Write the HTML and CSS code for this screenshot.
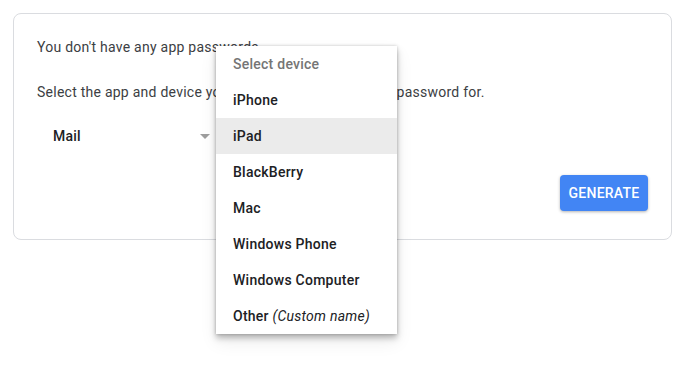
FILE: index.html
```html
<!DOCTYPE html>
<html>
<head>
<meta charset="utf-8">
<link rel="stylesheet" href="styles.css">
</head>
<body>
<div class="card">
  <p class="line first">You don't have any app passwords.</p>
  <p class="line second">Select the app and device you want to generate the app password for.</p>
  <div class="row">
    <div class="select">
      <span class="value">Mail</span>
      <span class="arrow"></span>
    </div>
    <div class="select device">
      <span class="value">Select device</span>
      <span class="arrow"></span>
      <ul class="menu">
        <li class="item header">Select device</li>
        <li class="item">iPhone</li>
        <li class="item active">iPad</li>
        <li class="item">BlackBerry</li>
        <li class="item">Mac</li>
        <li class="item">Windows Phone</li>
        <li class="item">Windows Computer</li>
        <li class="item">Other <em>(Custom name)</em></li>
      </ul>
    </div>
  </div>
  <div class="actions">
    <button class="btn">GENERATE</button>
  </div>
</div>
</body>
</html>
```
FILE: styles.css
```css
* { box-sizing: border-box; }
html, body { margin: 0; padding: 0; background: #fff; }
html { height: 100%; }
body {
  min-height: 100%;
  padding: 13px;
  font-family: Roboto, "Liberation Sans", Arial, sans-serif;
  font-size: 14px;
  letter-spacing: 0.25px;
  color: #3c4043;
}
.card {
  border: 1px solid #dadce0;
  border-radius: 8px;
  padding: 23px 23px 28px 23px;
  height: 227px;
}
.line { margin: 0; line-height: 20px; }
.second { margin-top: 25px; }
.row {
  display: flex;
  margin-top: 16px;
  height: 36px;
}
.select {
  position: relative;
  width: 179px;
  height: 36px;
  display: flex;
  align-items: center;
  padding-left: 16px;
  font-weight: 500;
  color: #202124;
}
.select.device { width: 181px; }
.arrow {
  position: absolute;
  right: 6px;
  top: 16px;
  width: 0; height: 0;
  border-left: 5px solid transparent;
  border-right: 5px solid transparent;
  border-top: 5px solid #9e9e9e;
}
.menu {
  position: absolute;
  left: 0;
  top: -72px;
  width: 181px;
  margin: 0;
  padding: 0;
  list-style: none;
  background: #fff;
  box-shadow: 0 4px 6px rgba(0,0,0,0.25), 0 0 3px rgba(0,0,0,0.2), 0 8px 16px rgba(0,0,0,0.08);
  z-index: 2;
}
.item {
  height: 36px;
  line-height: 36px;
  padding-left: 17px;
  font-weight: 500;
  color: #202124;
  white-space: nowrap;
}
.item.header { color: #757575; }
.item.active { background: #ebebeb; }
.item em { font-style: italic; font-weight: 400; }
.actions {
  display: flex;
  justify-content: flex-end;
  margin-top: 21px;
}
.btn {
  width: 88px;
  height: 36px;
  border: none;
  border-radius: 4px;
  background: #4285f4;
  color: #fff;
  font-family: Roboto, "Liberation Sans", Arial, sans-serif;
  font-size: 14px;
  font-weight: 500;
  letter-spacing: 0.25px;
  box-shadow: 0 1px 3px rgba(0,0,0,0.3);
  padding: 0;
}
```
